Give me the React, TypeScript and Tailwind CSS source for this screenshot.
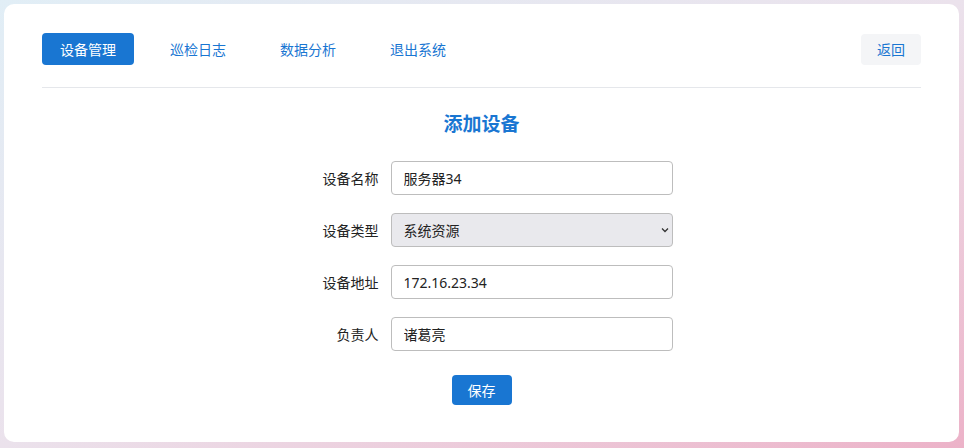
import { useState, type FC } from "react";

const navItems = ["设备管理", "巡检日志", "数据分析", "退出系统"];

const Field: FC<{ label: string; children: React.ReactNode }> = ({ label, children }) => (
	<div className="flex items-center gap-3">
		<label className="w-[90px] text-right text-[14px] text-[#222]">{label}</label>
		{children}
	</div>
);

export default function App() {
	const [name, setName] = useState("服务器34");
	const [type, setType] = useState("系统资源");
	const [addr, setAddr] = useState("172.16.23.34");
	const [owner, setOwner] = useState("诸葛亮");

	const inputCls =
		"w-[282px] h-[34px] rounded-[4px] border border-[#bdbdbd] bg-white px-3 text-[14px] text-[#222] outline-none";

	return (
		<div
			className="h-[448px] w-[964px] bg-gradient-to-br from-[#e1eef6] via-[#ebe2ec] to-[#ecb2c8] pt-1 pl-1"
			style={{ fontFamily: '"Noto Sans", "Noto Sans CJK SC", sans-serif' }}
		>
			<div className="h-[438px] w-[955px] rounded-[10px] bg-white px-[38px] pt-[29px]">
				{/* Nav */}
				<div className="flex items-center justify-between border-b border-[#e5e7eb] pb-[22px]">
					<div className="flex items-center gap-[18px]">
						{navItems.map((item, i) => (
							<button
								key={item}
								className={
									i === 0
										? "h-8 rounded-[4px] bg-[#1976d2] px-[18px] text-[14px] text-white"
										: "h-8 rounded-[4px] px-[18px] text-[14px] text-[#1976d2]"
								}
							>
								{item}
							</button>
						))}
					</div>
					<button className="h-[31px] rounded-[4px] bg-[#f4f5f7] px-4 text-[14px] text-[#1976d2]">
						返回
					</button>
				</div>

				{/* Form */}
				<h2 className="mt-[22px] text-center text-[19px] font-bold leading-[28px] text-[#1976d2]">
					添加设备
				</h2>
				<div className="mt-[23px] flex flex-col items-center gap-[18px] pr-[2px]">
					<Field label="设备名称">
						<input className={inputCls} value={name} onChange={(e) => setName(e.target.value)} />
					</Field>
					<Field label="设备类型">
						<div className="relative">
							<select
								className="h-[34px] w-[282px] appearance-none rounded-[4px] border border-[#bdbdbd] bg-[#e9e9ed] px-3 text-[14px] text-[#222] outline-none"
								value={type}
								onChange={(e) => setType(e.target.value)}
							>
								<option>系统资源</option>
								<option>网络设备</option>
								<option>存储设备</option>
							</select>
							<svg
								className="pointer-events-none absolute right-[4px] top-[14px]"
								width="8"
								height="6"
								viewBox="0 0 8 6"
							>
								<path d="M1 1.5 L4 4.5 L7 1.5" fill="none" stroke="#333" strokeWidth="1.3" />
							</svg>
						</div>
					</Field>
					<Field label="设备地址">
						<input className={inputCls} value={addr} onChange={(e) => setAddr(e.target.value)} />
					</Field>
					<Field label="负责人">
						<input className={inputCls} value={owner} onChange={(e) => setOwner(e.target.value)} />
					</Field>
				</div>
				<div className="mt-[24px] flex justify-center">
					<button className="h-[30px] w-[60px] rounded-[4px] bg-[#1976d2] text-[14px] text-white">
						保存
					</button>
				</div>
			</div>
		</div>
	);
}
